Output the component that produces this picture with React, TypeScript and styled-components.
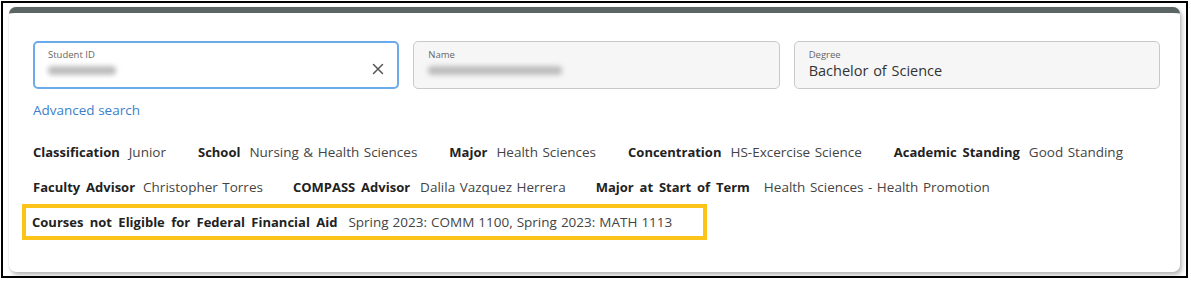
import React from "react";
import styled, { createGlobalStyle } from "styled-components";

const Global = createGlobalStyle`
  html, body { margin: 0; padding: 0; background: #ffffff; }
  body { font-family: "Open Sans", "Noto Sans", sans-serif; }
  * { box-sizing: border-box; }
`;

const Frame = styled.div`
  margin: 1px 0 0 1px;
  width: 1187px;
  height: 277px;
  border: 2px solid #000;
  padding: 4px 0 0 6px;
  background: #fff;
`;

const Card = styled.div`
  width: 1171px;
  height: 265px;
  border-radius: 7px;
  background: #fff;
  border-top: 6px solid #5b6563;
  box-shadow: 2px 3px 4px rgba(0, 0, 0, 0.28), 0 0 1px rgba(0,0,0,0.2);
  padding: 28px 20px 0 24px;
  display: flex;
  flex-direction: column;
`;

const Fields = styled.div`
  display: flex;
  gap: 14px;
`;

const Field = styled.div<{ $focused?: boolean; $filled?: boolean }>`
  flex: 1;
  height: 48px;
  border-radius: 5px;
  border: ${(p) => (p.$focused ? "2px solid #6cabeb" : "1px solid #c9c9c9")};
  background: ${(p) => (p.$filled ? "#f6f6f6" : "#fff")};
  padding: ${(p) => (p.$focused ? "5px 13px 0 13px" : "6px 14px 0 14px")};
  display: flex;
  align-items: center;
`;

const FieldBody = styled.div`
  flex: 1;
  display: flex;
  flex-direction: column;
  align-self: flex-start;
`;

const FieldLabel = styled.div`
  font-size: 9.5px;
  line-height: 13px;
  color: #666;
`;

const FieldValue = styled.div`
  font-size: 14.5px;
  word-spacing: 1px;
  line-height: 20px;
  color: #333;
`;

const Blurred = styled.div<{ $w: number }>`
  margin-top: 5px;
  height: 9px;
  width: ${(p) => p.$w}px;
  border-radius: 4px;
  background: #bdbdbd;
  filter: blur(2.5px);
`;

const ClearIcon = styled.svg`
  width: 12px;
  height: 12px;
  margin-right: 0;
  margin-top: 2px;
`;

const Link = styled.a`
  margin-top: 12px;
  font-size: 13.5px;
  line-height: 18px;
  color: #3b7fcc;
  text-decoration: none;
  align-self: flex-start;
`;

const InfoRow = styled.div<{ $top: number; $gap: number }>`
  display: flex;
  align-items: baseline;
  gap: ${(p) => p.$gap}px;
  margin-top: ${(p) => p.$top}px;
  line-height: 18px;
`;

const Item = styled.div<{ $gap?: number }>`
  display: flex;
  align-items: baseline;
  gap: ${(p) => p.$gap ?? 8}px;
  white-space: nowrap;
`;

const Label = styled.span`
  font-size: 13px;
  word-spacing: 2.5px;
  font-weight: 700;
  color: #222;
`;

const Value = styled.span`
  font-size: 13.5px;
  word-spacing: 1px;
  color: #444;
`;

const Highlight = styled.div`
  margin-top: 8px;
  margin-left: -11px;
  align-self: flex-start;
  width: 685px;
  height: 36px;
  border: 4px solid #fcc419;
  padding: 0 0 0 6px;
  display: flex;
  align-items: center;
`;

const HighlightLabel = styled(Label)`
  word-spacing: 3px;
`;

const HighlightValue = styled(Value)`
  font-size: 13.5px;
  word-spacing: 0.5px;
`;

const items1: [string, string][] = [
  ["Classification", "Junior"],
  ["School", "Nursing & Health Sciences"],
  ["Major", "Health Sciences"],
  ["Concentration", "HS-Excercise Science"],
  ["Academic Standing", "Good Standing"],
];

const items2: [string, string, number][] = [
  ["Faculty Advisor", "Christopher Torres", 8],
  ["COMPASS Advisor", "Dalila Vazquez Herrera", 10],
  ["Major at Start of Term", "Health Sciences - Health Promotion", 14],
];

export default function App() {
  return (
    <>
      <Global />
      <Frame>
        <Card>
          <Fields>
            <Field $focused>
              <FieldBody>
                <FieldLabel>Student ID</FieldLabel>
                <Blurred $w={68} />
              </FieldBody>
              <ClearIcon viewBox="0 0 12 12">
                <path d="M1.5 1.5 L10.5 10.5 M10.5 1.5 L1.5 10.5" stroke="#555" strokeWidth="1.5" strokeLinecap="round" />
              </ClearIcon>
            </Field>
            <Field $filled>
              <FieldBody>
                <FieldLabel>Name</FieldLabel>
                <Blurred $w={134} />
              </FieldBody>
            </Field>
            <Field $filled>
              <FieldBody>
                <FieldLabel>Degree</FieldLabel>
                <FieldValue>Bachelor of Science</FieldValue>
              </FieldBody>
            </Field>
          </Fields>
          <Link href="#">Advanced search</Link>
          <InfoRow $top={24} $gap={32}>
            {items1.map(([l, v]) => (
              <Item key={l} $gap={9}>
                <Label>{l}</Label>
                <Value>{v}</Value>
              </Item>
            ))}
          </InfoRow>
          <InfoRow $top={17} $gap={30}>
            {items2.map(([l, v, g]) => (
              <Item key={l} $gap={g}>
                <Label>{l}</Label>
                <Value>{v}</Value>
              </Item>
            ))}
          </InfoRow>
          <Highlight>
            <Item $gap={11}>
              <HighlightLabel>Courses not Eligible for Federal Financial Aid</HighlightLabel>
              <HighlightValue>Spring 2023: COMM 1100, Spring 2023: MATH 1113</HighlightValue>
            </Item>
          </Highlight>
        </Card>
      </Frame>
    </>
  );
}
